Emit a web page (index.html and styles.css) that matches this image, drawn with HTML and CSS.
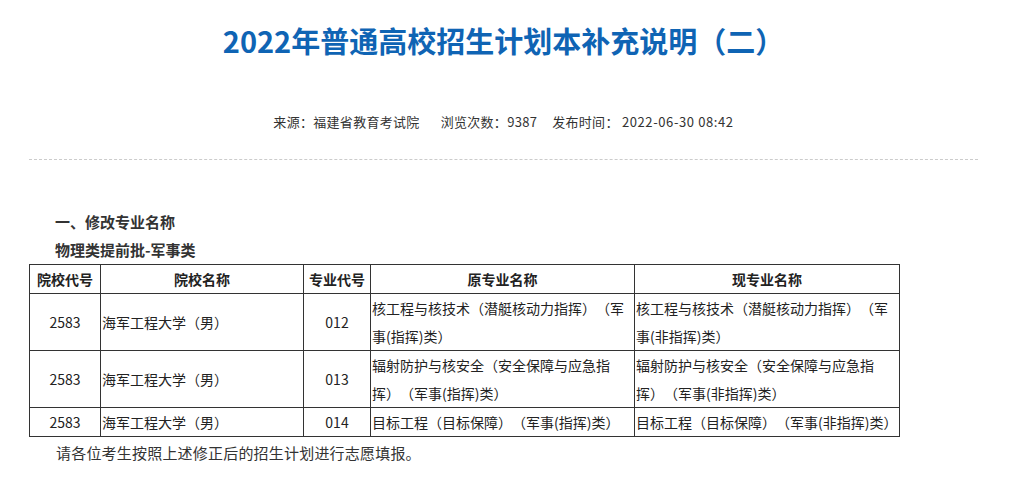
FILE: index.html
```html
<!DOCTYPE html>
<html lang="zh-CN">
<head>
<meta charset="utf-8">
<title>2022年普通高校招生计划本补充说明（二）</title>
<link rel="stylesheet" href="styles.css">
</head>
<body>
<div class="page">
  <h1 class="title">2022年普通高校招生计划本补充说明（二）</h1>
  <div class="meta">
    <span class="m-src">来源：福建省教育考试院</span>
    <span class="m-views">浏览次数：9387</span>
    <span class="m-date">发布时间： <span class="num">2022-06-30 08:42</span></span>
  </div>
  <div class="content">
    <p class="h-sec">一、修改专业名称</p>
    <p class="h-sub">物理类提前批-军事类</p>
    <table class="plan">
      <colgroup>
        <col class="c1"><col class="c2"><col class="c3"><col class="c4"><col class="c5">
      </colgroup>
      <thead>
        <tr><th>院校代号</th><th>院校名称</th><th>专业代号</th><th>原专业名称</th><th>现专业名称</th></tr>
      </thead>
      <tbody>
        <tr><td class="ctr">2583</td><td>海军工程大学（男）</td><td class="ctr">012</td><td>核工程与核技术（潜艇核动力指挥）（军事(指挥)类）</td><td>核工程与核技术（潜艇核动力指挥）（军事(非指挥)类）</td></tr>
        <tr><td class="ctr">2583</td><td>海军工程大学（男）</td><td class="ctr">013</td><td>辐射防护与核安全（安全保障与应急指挥）（军事(指挥)类）</td><td>辐射防护与核安全（安全保障与应急指挥）（军事(非指挥)类）</td></tr>
        <tr><td class="ctr">2583</td><td>海军工程大学（男）</td><td class="ctr">014</td><td>目标工程（目标保障）（军事(指挥)类）</td><td>目标工程（目标保障）（军事(非指挥)类）</td></tr>
      </tbody>
    </table>
    <p class="note">请各位考生按照上述修正后的招生计划进行志愿填报。</p>
  </div>
</div>
</body>
</html>
```
FILE: styles.css
```css
html, body {
  margin: 0;
  padding: 0;
  background: #fff;
}
body {
  font-family: "Noto Sans CJK SC", "Noto Sans", sans-serif;
  color: #333;
  text-spacing-trim: space-all;
}
.page {
  padding: 20px 32px 0 29px;
}
.title {
  margin: 0;
  text-align: center;
  font-size: 29px;
  line-height: 40px;
  font-weight: bold;
  color: #0f64b4;
}
.meta {
  margin-top: 52px;
  font-size: 13px;
  line-height: 20px;
  letter-spacing: 0.3px;
  color: #333;
  padding-bottom: 27px;
  border-bottom: 1px dashed #ccc;
  display: flex;
  justify-content: center;
}
.m-src {
  margin-right: 21px;
}
.m-views {
  margin-right: 15px;
}
.m-date .num {
  letter-spacing: 0.6px;
}
.content {
  padding-top: 48px;
}
.h-sec, .h-sub {
  margin: 0;
  padding-left: 26px;
  font-size: 15px;
  line-height: 28px;
  font-weight: bold;
  color: #333;
}
.plan {
  border-collapse: collapse;
  table-layout: fixed;
  width: 870px;
  font-size: 14px;
  color: #222;
}
.plan .c1 { width: 71px; }
.plan .c2 { width: 203px; }
.plan .c3 { width: 67px; }
.plan .c4 { width: 264px; }
.plan .c5 { width: 265px; }
.plan th, .plan td {
  border: 1px solid #333;
  padding: 0 1px;
  line-height: 28px;
  vertical-align: middle;
  text-align: left;
  font-weight: normal;
}
.plan th {
  text-align: center;
  font-weight: bold;
}
.plan td.ctr {
  text-align: center;
}
.note {
  margin: 4px 0 0;
  padding-left: 27px;
  font-size: 15px;
  line-height: 24px;
  letter-spacing: 0.2px;
  color: #333;
}
```
